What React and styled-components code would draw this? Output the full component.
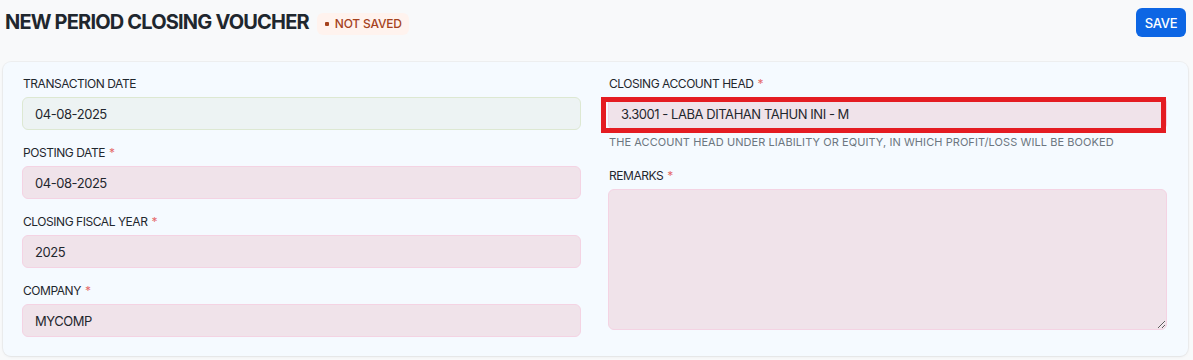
import React from "react";
import styled, { createGlobalStyle } from "styled-components";

const Global = createGlobalStyle`
  html, body { margin: 0; padding: 0; background: #f8f9fa; }
  body { font-family: Inter, "Noto Sans", sans-serif; color: #1f272e; -webkit-font-smoothing: antialiased; }
  * { box-sizing: border-box; }
`;

const Page = styled.div`
  width: 1193px;
  height: 360px;
  padding: 0 5px 0 3px;
  overflow: hidden;
`;

const Header = styled.div`
  display: flex;
  align-items: center;
  justify-content: space-between;
  height: 62px;
  padding: 0 2px 18px 2px;
`;

const TitleGroup = styled.div`
  display: flex;
  align-items: center;
  gap: 8px;
`;

const Title = styled.h1`
  margin: 0;
  font-size: 20px;
  font-weight: 700;
  line-height: 28px;
  color: #1f272e;
  letter-spacing: -0.82px;
`;

const Badge = styled.span`
  display: inline-flex;
  align-items: center;
  gap: 6px;
  height: 22px;
  padding: 0 7px 0 8px;
  margin-top: 3px;
  border-radius: 6px;
  background: #fff3ee;
  color: #a5421d;
  font-size: 12px;
  font-weight: 500;
  letter-spacing: -0.2px;
`;

const Dot = styled.span`
  width: 4px;
  height: 4px;
  border-radius: 1px;
  background: #a5421d;
`;

const PrimaryButton = styled.button`
  height: 29px;
  width: 50px;
  border: none;
  border-radius: 6px;
  background: #0d66e4;
  color: #fff;
  font-family: inherit;
  font-size: 13px;
  font-weight: 500;
  letter-spacing: -0.3px;
  align-self: flex-start;
  margin-top: 8px;
`;

const Card = styled.div`
  display: grid;
  grid-template-columns: 1fr 1fr;
  column-gap: 27px;
  padding: 14px 21px 19px 19px;
  background: #f5faff;
  border-radius: 8px;
  box-shadow: 0 0 0 1px rgba(0, 0, 0, 0.035), 0 1px 3px rgba(0, 0, 0, 0.06);
  height: 294px;
`;

const Column = styled.div`
  display: flex;
  flex-direction: column;
  gap: 15px;
`;

const Field = styled.div`
  display: flex;
  flex-direction: column;
`;

const Label = styled.label`
  font-size: 12px;
  line-height: 16px;
  padding-left: 1px;
  margin-bottom: 5px;
  color: #1f272e;
  letter-spacing: -0.45px;
  text-transform: uppercase;
`;

const Req = styled.span`
  color: #e56b6b;
  margin-left: 4px;
`;

const InputWrap = styled.div`
  position: relative;
`;

const Input = styled.div`
  height: 33px;
  display: flex;
  align-items: center;
  padding: 0 12px;
  border-radius: 6px;
  font-size: 13px;
  letter-spacing: -0.45px;
  color: #1f272e;
  background: ${(p) => (p.$readonly ? "#edf3f3" : "#f0e3ea")};
  border: 1px solid ${(p) => (p.$readonly ? "#dde8d2" : "#f4d3e3")};
  text-transform: uppercase;
`;

const Highlight = styled.div`
  position: absolute;
  left: -7px;
  right: 1px;
  top: 0;
  bottom: -3px;
  border: 5px solid #e41c22;
  pointer-events: none;
`;

const Description = styled.div`
  margin-top: 4px;
  margin-bottom: 3px;
  padding-left: 1px;
  font-size: 11px;
  line-height: 16px;
  letter-spacing: 0.07px;
  color: #6c7680;
  text-transform: uppercase;
`;

const TextArea = styled.textarea`
  height: 141px;
  width: 100%;
  resize: vertical;
  border-radius: 6px;
  background: #f0e3ea;
  border: 1px solid #f4d3e3;
  font-family: inherit;
  font-size: 13px;
  padding: 8px 12px;
  outline: none;
  display: block;
`;

export default function App() {
  return (
    <Page>
      <Global />
      <Header>
        <TitleGroup>
          <Title>NEW PERIOD CLOSING VOUCHER</Title>
          <Badge>
            <Dot />
            NOT SAVED
          </Badge>
        </TitleGroup>
        <PrimaryButton>SAVE</PrimaryButton>
      </Header>
      <Card>
        <Column>
          <Field>
            <Label>Transaction Date</Label>
            <Input $readonly>04-08-2025</Input>
          </Field>
          <Field>
            <Label>
              Posting Date<Req>*</Req>
            </Label>
            <Input>04-08-2025</Input>
          </Field>
          <Field>
            <Label>
              Closing Fiscal Year<Req>*</Req>
            </Label>
            <Input>2025</Input>
          </Field>
          <Field>
            <Label>
              Company<Req>*</Req>
            </Label>
            <Input>MyComp</Input>
          </Field>
        </Column>
        <Column>
          <Field>
            <Label>
              Closing Account Head<Req>*</Req>
            </Label>
            <InputWrap>
              <Input>3.3001 - Laba Ditahan Tahun Ini - M</Input>
              <Highlight />
            </InputWrap>
            <Description>
              The account head under Liability or Equity, in which Profit/Loss will be booked
            </Description>
          </Field>
          <Field>
            <Label>
              Remarks<Req>*</Req>
            </Label>
            <TextArea defaultValue="" />
          </Field>
        </Column>
      </Card>
    </Page>
  );
}
